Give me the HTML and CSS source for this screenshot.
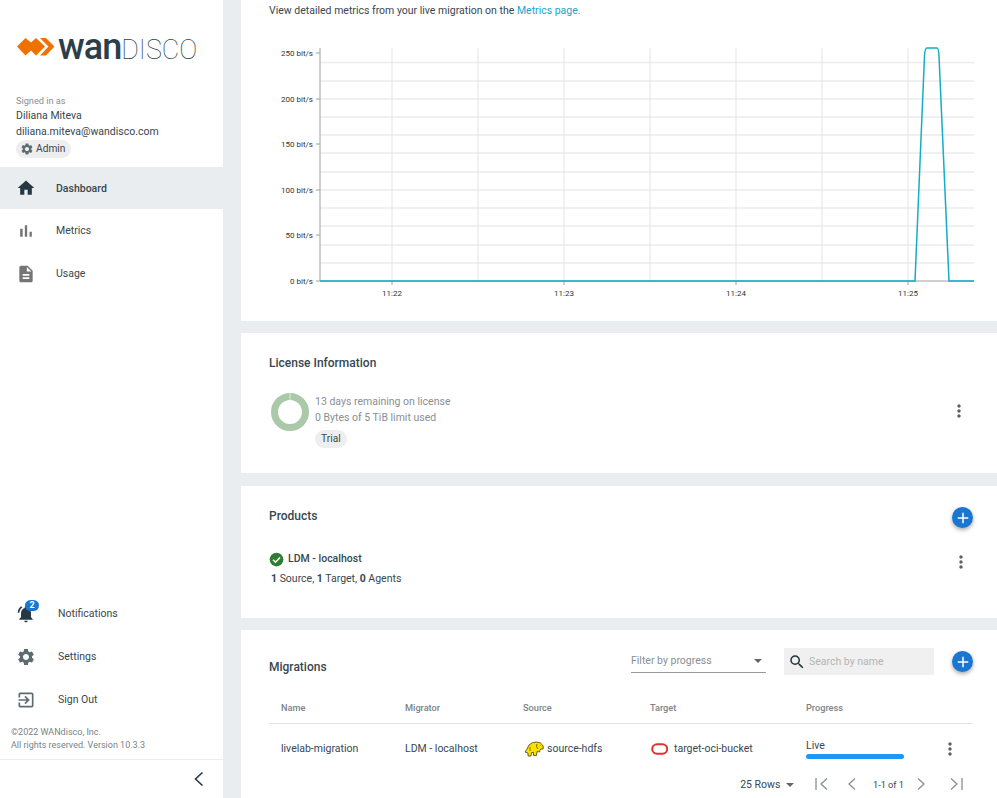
FILE: index.html
```html
<!DOCTYPE html>
<html lang="en">

<head>
    <meta charset="UTF-8">
    <meta name="viewport" content="width=device-width, initial-scale=1.0">
    <title>Dashboard</title>
    <link rel="stylesheet" href="styles.css">
</head>

<body>
    <aside class="sidebar">
        <div class="logo">
            <svg class="logo-mark" width="38" height="20" viewBox="0 0 38 20">
                <path d="M0 9.5 L8.5 1 L14 5.5 L19 1 L28 9.5 L19 18.5 L14 13.5 L8.5 18.5 Z" fill="#ee7203"/>
                <path d="M23 1 L29 1 L37.5 9.5 L29 18.5 L23 18.5 L31.5 9.5 Z" fill="#ee7203"/>
            </svg>
            <span class="logo-text"><b>wan</b>DISCO</span>
        </div>
        <div class="user">
            <div class="user-label">Signed in as</div>
            <div class="user-line">Diliana Miteva</div>
            <div class="user-line">diliana.miteva@wandisco.com</div>
            <span class="chip chip-admin">
                <svg width="14" height="14" viewBox="0 0 24 24"><path class="gear" d="M19.14 12.94c.04-.3.06-.61.06-.94 0-.32-.02-.64-.07-.94l2.03-1.58a.49.49 0 0 0 .12-.61l-1.92-3.32a.488.488 0 0 0-.59-.22l-2.39.96c-.5-.38-1.03-.7-1.62-.94l-.36-2.54a.484.484 0 0 0-.48-.41h-3.84c-.24 0-.43.17-.47.41l-.36 2.54c-.59.24-1.13.57-1.62.94l-2.39-.96c-.22-.08-.47 0-.59.22L2.74 8.87c-.12.21-.08.47.12.61l2.03 1.58c-.05.3-.09.63-.09.94s.02.64.07.94l-2.03 1.58a.49.49 0 0 0-.12.61l1.92 3.32c.12.22.37.29.59.22l2.39-.96c.5.38 1.03.7 1.62.94l.36 2.54c.05.24.24.41.48.41h3.84c.24 0 .44-.17.47-.41l.36-2.54c.59-.24 1.13-.56 1.62-.94l2.39.96c.22.08.47 0 .59-.22l1.92-3.32c.12-.22.07-.47-.12-.61l-2.01-1.58zM12 15.6c-1.98 0-3.6-1.62-3.6-3.6s1.62-3.6 3.6-3.6 3.6 1.62 3.6 3.6-1.62 3.6-3.6 3.6z"/></svg>
                Admin
            </span>
        </div>
        <nav class="nav">
            <a class="nav-item active">
                <svg width="20" height="20" viewBox="0 0 24 24"><path fill="#263843" d="M10 20v-6h4v6h5v-8h3L12 3 2 12h3v8z"/></svg>
                <span>Dashboard</span>
            </a>
            <a class="nav-item">
                <svg width="20" height="20" viewBox="0 0 24 24"><path fill="#757575" d="M5 9.2h3V19H5zM10.6 5h2.8v14h-2.8zm5.6 8H19v6h-2.8z"/></svg>
                <span>Metrics</span>
            </a>
            <a class="nav-item">
                <svg width="20" height="20" viewBox="0 0 24 24"><path fill="#757575" d="M14 2H6c-1.1 0-1.99.9-1.99 2L4 20c0 1.1.89 2 1.99 2H18c1.1 0 2-.9 2-2V8l-6-6zm2 16H8v-2h8v2zm0-4H8v-2h8v2zm-3-5V3.5L18.5 9H13z"/></svg>
                <span>Usage</span>
            </a>
        </nav>
        <nav class="nav nav-bottom">
            <a class="nav-item">
                <span class="bell">
                    <svg width="20" height="20" viewBox="0 0 24 24"><path fill="#263843" d="M12 22c1.1 0 2-.9 2-2h-4c0 1.1.9 2 2 2zm6-6v-5c0-3.07-1.63-5.64-4.5-6.32V4c0-.83-.67-1.5-1.5-1.5s-1.5.67-1.5 1.5v.68C7.64 5.36 6 7.92 6 11v5l-2 2v1h16v-1l-2-2zM7.58 4.08 6.15 2.65C3.75 4.48 2.17 7.3 2.03 10.5h2c.15-2.65 1.51-4.97 3.55-6.42z"/></svg>
                    <b class="badge">2</b>
                </span>
                <span>Notifications</span>
            </a>
            <a class="nav-item">
                <svg width="20" height="20" viewBox="0 0 24 24"><path class="gear" d="M19.14 12.94c.04-.3.06-.61.06-.94 0-.32-.02-.64-.07-.94l2.03-1.58a.49.49 0 0 0 .12-.61l-1.92-3.32a.488.488 0 0 0-.59-.22l-2.39.96c-.5-.38-1.03-.7-1.62-.94l-.36-2.54a.484.484 0 0 0-.48-.41h-3.84c-.24 0-.43.17-.47.41l-.36 2.54c-.59.24-1.13.57-1.62.94l-2.39-.96c-.22-.08-.47 0-.59.22L2.74 8.87c-.12.21-.08.47.12.61l2.03 1.58c-.05.3-.09.63-.09.94s.02.64.07.94l-2.03 1.58a.49.49 0 0 0-.12.61l1.92 3.32c.12.22.37.29.59.22l2.39-.96c.5.38 1.03.7 1.62.94l.36 2.54c.05.24.24.41.48.41h3.84c.24 0 .44-.17.47-.41l.36-2.54c.59-.24 1.13-.56 1.62-.94l2.39.96c.22.08.47 0 .59-.22l1.92-3.32c.12-.22.07-.47-.12-.61l-2.01-1.58zM12 15.6c-1.98 0-3.6-1.62-3.6-3.6s1.62-3.6 3.6-3.6 3.6 1.62 3.6 3.6-1.62 3.6-3.6 3.6z"/></svg>
                <span>Settings</span>
            </a>
            <a class="nav-item">
                <svg width="20" height="20" viewBox="0 0 24 24"><path fill="#5f6b73" d="M10.09 15.59 11.5 17l5-5-5-5-1.41 1.41L12.67 11H3v2h9.67l-2.58 2.59zM19 3H5c-1.11 0-2 .9-2 2v4h2V5h14v14H5v-4H3v4c0 1.1.89 2 2 2h14c1.1 0 2-.9 2-2V5c0-1.1-.9-2-2-2z"/></svg>
                <span>Sign Out</span>
            </a>
        </nav>
        <div class="copyright">
            ©2022 WANdisco, Inc.<br>
            All rights reserved. Version 10.3.3
        </div>
        <div class="collapse">
            <svg width="24" height="24" viewBox="0 0 24 24"><path fill="none" stroke="#263843" stroke-width="1.6" d="M15.5 5.5 8.5 12l7 6.5"/></svg>
        </div>
    </aside>

    <main class="main">
        <section class="card card-chart">
            <p class="chart-note">View detailed metrics from your live migration on the <a>Metrics page.</a></p>
            <svg class="chart" width="756" height="300" viewBox="241 0 756 300">
                <g stroke="#ececec" stroke-width="1.5">
                    <path d="M320 62.5H974M320 81H974M320 99H974M320 117H974M320 135H974M320 153H974M320 172H974M320 190H974M320 208H974M320 226H974M320 245H974M320 263H974"/>
                    <path stroke="#e4e4e4" stroke-width="1" d="M392 48V281M478 48V281M564 48V281M650 48V281M736 48V281M822 48V281M908 48V281"/>
                </g>
                <path stroke="#a0a0a0" fill="none" d="M320 48V281H974M316 53H320M316 99H320M316 144H320M316 190H320M316 235H320M316 281H320M392 281V285M564 281V285M736 281V285M908 281V285"/>
                <path fill="none" stroke="#12adc9" stroke-width="1.5" d="M320 281H915L924.5 56Q925 48 927 48H937Q938.5 48 939 56L949 281H974"/>
                <g class="tick-y">
                    <text x="313" y="56">250 bit/s</text>
                    <text x="313" y="102">200 bit/s</text>
                    <text x="313" y="147">150 bit/s</text>
                    <text x="313" y="193">100 bit/s</text>
                    <text x="313" y="238">50 bit/s</text>
                    <text x="313" y="284">0 bit/s</text>
                </g>
                <g class="tick-x">
                    <text x="392" y="296">11:22</text>
                    <text x="564" y="296">11:23</text>
                    <text x="736" y="296">11:24</text>
                    <text x="908" y="296">11:25</text>
                </g>
            </svg>
        </section>

        <section class="card card-license">
            <h2>License Information</h2>
            <div class="row">
                <svg class="donut" width="38" height="38" viewBox="0 0 38 38">
                    <circle cx="19" cy="19" r="15.5" fill="none" stroke="#a9c9a9" stroke-width="7"/>
                    <path d="M19 0V7" stroke="#dfeadf" stroke-width="1"/>
                </svg>
                <div class="license-text">
                    <div>13 days remaining on license</div>
                    <div>0 Bytes of 5 TiB limit used</div>
                    <span class="chip chip-trial">Trial</span>
                </div>
                <button class="more">
                    <svg width="20" height="20" viewBox="0 0 24 24"><path fill="#5f5f5f" d="M12 8c1.1 0 2-.9 2-2s-.9-2-2-2-2 .9-2 2 .9 2 2 2zm0 2c-1.1 0-2 .9-2 2s.9 2 2 2 2-.9 2-2-.9-2-2-2zm0 6c-1.1 0-2 .9-2 2s.9 2 2 2 2-.9 2-2-.9-2-2-2z"/></svg>
                </button>
            </div>
        </section>

        <section class="card card-products">
            <div class="card-head">
                <h2>Products</h2>
                <button class="fab">
                    <svg width="18" height="18" viewBox="0 0 24 24"><path fill="#fff" d="M19 13h-6v6h-2v-6H5v-2h6V5h2v6h6v2z"/></svg>
                </button>
            </div>
            <div class="row">
                <div class="product">
                    <div class="product-name">
                        <svg width="15" height="15" viewBox="0 0 24 24"><circle cx="12" cy="12" r="11" fill="#2e7d32"/><path fill="none" stroke="#fff" stroke-width="2.4" d="M6.5 12.5l3.8 3.8 7.4-7.6"/></svg>
                        LDM - localhost
                    </div>
                    <div class="product-counts"><b>1</b> Source, <b>1</b> Target, <b>0</b> Agents</div>
                </div>
                <button class="more">
                    <svg width="20" height="20" viewBox="0 0 24 24"><path fill="#5f5f5f" d="M12 8c1.1 0 2-.9 2-2s-.9-2-2-2-2 .9-2 2 .9 2 2 2zm0 2c-1.1 0-2 .9-2 2s.9 2 2 2 2-.9 2-2-.9-2-2-2zm0 6c-1.1 0-2 .9-2 2s.9 2 2 2 2-.9 2-2-.9-2-2-2z"/></svg>
                </button>
            </div>
        </section>

        <section class="card card-migrations">
            <div class="card-head">
                <h2>Migrations</h2>
                <div class="tools">
                    <div class="filter">
                        <span>Filter by progress</span>
                        <i class="caret"></i>
                    </div>
                    <div class="search">
                        <svg width="18" height="18" viewBox="0 0 24 24"><path fill="#263238" d="M15.5 14h-.79l-.28-.27A6.471 6.471 0 0 0 16 9.5 6.5 6.5 0 1 0 9.5 16c1.61 0 3.09-.59 4.23-1.57l.27.28v.79l5 4.99L20.49 19l-4.99-5zm-6 0C7.01 14 5 11.99 5 9.5S7.01 5 9.5 5 14 7.01 14 9.5 11.99 14 9.5 14z"/></svg>
                        <span>Search by name</span>
                    </div>
                    <button class="fab">
                        <svg width="18" height="18" viewBox="0 0 24 24"><path fill="#fff" d="M19 13h-6v6h-2v-6H5v-2h6V5h2v6h6v2z"/></svg>
                    </button>
                </div>
            </div>
            <table class="table">
                <colgroup>
                    <col class="col-name"><col class="col-migrator"><col class="col-source"><col class="col-target"><col>
                </colgroup>
                <thead>
                    <tr><th>Name</th><th>Migrator</th><th>Source</th><th>Target</th><th>Progress</th></tr>
                </thead>
                <tbody>
                    <tr>
                        <td>livelab-migration</td>
                        <td>LDM - localhost</td>
                        <td>
                            <span class="cell-icon icon-source">
                                <svg width="20" height="16" viewBox="0 0 20 16">
                                    <path fill="#f8e000" stroke="#4a4300" stroke-width=".8" d="M1 11 L3 8 L5 4 Q8 1 12 1 Q17 1 18.5 4 Q20 6 19 8 L17 8 L16 9 L15.5 11 L13 10.5 L12.5 14.5 L9.5 14.5 L9.5 11.5 L7.5 11.5 L7 15 L4 15 L4 12 Z"/>
                                    <path fill="none" stroke="#4a4300" stroke-width=".7" d="M13 3 Q11.5 6 14 8M16 4.5h.6M6 6v4"/>
                                </svg>
                                source-hdfs
                            </span>
                        </td>
                        <td>
                            <span class="cell-icon icon-target">
                                <svg width="18" height="12" viewBox="0 0 18 12"><rect x="1.2" y="1.2" width="15" height="9.6" rx="4.8" fill="none" stroke="#e0312b" stroke-width="2"/></svg>
                                target-oci-bucket
                            </span>
                        </td>
                        <td>
                            <div class="progress">
                                <div class="progress-text">
                                    <span>Live</span>
                                    <div class="bar"></div>
                                </div>
                                <button class="more">
                                    <svg width="20" height="20" viewBox="0 0 24 24"><path fill="#5f5f5f" d="M12 8c1.1 0 2-.9 2-2s-.9-2-2-2-2 .9-2 2 .9 2 2 2zm0 2c-1.1 0-2 .9-2 2s.9 2 2 2 2-.9 2-2-.9-2-2-2zm0 6c-1.1 0-2 .9-2 2s.9 2 2 2 2-.9 2-2-.9-2-2-2z"/></svg>
                                </button>
                            </div>
                        </td>
                    </tr>
                </tbody>
            </table>
            <div class="pager">
                <span class="rows">25 Rows <i class="caret"></i></span>
                <svg class="first" width="18" height="18" viewBox="0 0 18 18"><path class="pager-icon" d="M3 3V15M14 3.5 8 9l6 5.5"/></svg>
                <svg class="prev" width="18" height="18" viewBox="0 0 18 18"><path class="pager-icon" d="M12 3.5 6 9l6 5.5"/></svg>
                <span class="pages">1-1 of 1</span>
                <svg class="next" width="18" height="18" viewBox="0 0 18 18"><path class="pager-icon" d="M6 3.5 12 9l-6 5.5"/></svg>
                <svg class="last" width="18" height="18" viewBox="0 0 18 18"><path class="pager-icon" d="M15 3V15M4 3.5 10 9l-6 5.5"/></svg>
            </div>
        </section>
    </main>
</body>

</html>
```

FILE: styles.css
```css
html, body {
    margin: 0;
    height: 100%;
}

body {
    display: flex;
    height: 798px;
    overflow: hidden;
    background-color: #e9edf0;
    color: #37474f;
    font-family: Roboto, "Liberation Sans", sans-serif;
    font-size: 10.5px;
}

/* sidebar */
.sidebar {
    display: flex;
    flex-direction: column;
    flex: none;
    width: 223px;
    background-color: #fff;
}

.logo {
    display: flex;
    align-items: center;
    height: 36px;
    margin-top: 29px;
    padding-left: 17px;
}

.logo-text {
    margin-left: 3px;
    color: #2c3e4a;
    font-size: 27px;
    font-weight: 100;
}

.logo-text b {
    font-size: 36px;
    font-weight: 500;
    letter-spacing: -1px;
}

.user {
    padding: 29px 0 0 16px;
    height: 73px;
    line-height: 16px;
}

.user-label {
    color: #8a8f93;
    font-size: 9.2px;
    line-height: 14px;
}

.chip {
    display: inline-flex;
    align-items: center;
    border-radius: 10px;
    background-color: #eeeeee;
}

.chip-admin {
    gap: 2px;
    height: 18px;
    padding: 0 6px 0 4px;
    font-size: 10.2px;
}

.gear {
    fill: #5f6b73;
}

.nav {
    display: flex;
    flex-direction: column;
}

.nav-bottom {
    margin-top: auto;
}

.nav-item {
    display: flex;
    align-items: center;
    gap: 20px;
    height: 43px;
    padding-left: 16px;
}

.nav-bottom .nav-item {
    gap: 22px;
}

.nav-item.active {
    height: 42px;
    background-color: #e9edf0;
    font-weight: 500;
}

.bell {
    position: relative;
    display: flex;
}

.badge {
    position: absolute;
    top: -4px;
    left: 9px;
    width: 14px;
    height: 11px;
    border-radius: 6px;
    background-color: #1976d2;
    color: #fff;
    font-size: 9px;
    line-height: 11px;
    text-align: center;
}

.copyright {
    padding: 5px 0 7px 11px;
    color: #7b8185;
    font-size: 9px;
    line-height: 13px;
}

.collapse {
    display: flex;
    justify-content: flex-end;
    align-items: center;
    height: 38px;
    padding-right: 12px;
    border-top: 1px solid #eeeeee;
}

/* main column */
.main {
    display: flex;
    flex-direction: column;
    flex: none;
    gap: 12px;
    width: 756px;
    margin-left: 18px;
}

.card {
    flex: none;
    box-sizing: border-box;
    padding: 0 24px 0 28px;
    background-color: #fff;
}

.card-chart {
    position: relative;
    height: 321px;
}

.card-license {
    height: 140px;
}

.card-products {
    height: 132px;
    margin-top: 1px;
}

.card-migrations {
    height: 168px;
}

h2 {
    margin: 0;
    font-size: 12px;
    font-weight: 500;
    color: #37474f;
}

.chart-note {
    margin: 0;
    padding-top: 3px;
    line-height: 16px;
}

.chart-note a {
    color: #1ea5c4;
}

/* the chart is drawn to page coordinates */
.chart {
    position: absolute;
    top: 0;
    left: 0;
}

.chart text {
    fill: #333333;
    font-size: 8px;
}

.tick-y text {
    text-anchor: end;
}

.tick-x text {
    text-anchor: middle;
}

.row {
    display: flex;
    align-items: flex-start;
}

.more {
    display: flex;
    margin-left: auto;
    padding: 0;
    border: none;
    background: none;
}

.card-license h2 {
    padding-top: 23px;
}

.card-license .row {
    gap: 6px;
    margin-top: 23px;
    padding-left: 2px;
}

.card-license .more {
    margin-top: 8px;
    margin-right: 4px;
}

.license-text {
    padding-top: 1px;
    color: #8a8f93;
    line-height: 16px;
}

.chip-trial {
    height: 18px;
    margin-top: 4px;
    padding: 0 6px;
    color: #37474f;
    font-size: 10.2px;
}

.card-head {
    display: flex;
    justify-content: space-between;
    align-items: center;
}

.fab {
    display: flex;
    justify-content: center;
    align-items: center;
    width: 21px;
    height: 21px;
    padding: 0;
    border: none;
    border-radius: 50%;
    background-color: #1976d2;
    box-shadow: 0 2px 4px rgba(0, 0, 0, 0.35);
}

.card-products .card-head {
    height: 21px;
    padding-top: 21px;
}

.card-products h2 {
    margin-bottom: 3px;
}

.card-products .row {
    margin-top: 23px;
}

.card-products .more {
    margin-top: 1px;
    margin-right: 2px;
}

.product-name {
    display: flex;
    align-items: center;
    gap: 4px;
    font-weight: 500;
    line-height: 16px;
}

.product-counts {
    margin-top: 4px;
    padding-left: 2px;
    line-height: 16px;
}

.product-counts b {
    font-weight: 700;
}

/* migrations */
.card-migrations .card-head {
    height: 27px;
    padding-top: 18px;
}

.card-migrations h2 {
    margin-top: 10px;
}

.tools {
    display: flex;
    align-items: center;
}

.filter {
    display: flex;
    justify-content: space-between;
    align-items: center;
    box-sizing: border-box;
    width: 135px;
    height: 23px;
    margin-bottom: 1px;
    border-bottom: 1px solid #9a9a9a;
    color: #8a8f93;
}

.caret {
    display: inline-block;
    border-left: 4px solid transparent;
    border-right: 4px solid transparent;
    border-top: 4px solid #666;
}

.filter .caret {
    margin-right: 4px;
}

.search {
    display: flex;
    align-items: center;
    gap: 3px;
    box-sizing: border-box;
    width: 150px;
    height: 27px;
    margin-left: 18px;
    padding-left: 4px;
    background-color: #f0f0f0;
    color: #b4b4b4;
}

.tools .fab {
    margin-left: 18px;
}

.table {
    width: 100%;
    margin-top: 16px;
    border-collapse: collapse;
    table-layout: fixed;
}

.col-name {
    width: 124px;
}

.col-migrator {
    width: 118px;
}

.col-source {
    width: 127px;
}

.col-target {
    width: 156px;
}

.table th {
    height: 32px;
    padding: 0 0 0 12px;
    border-bottom: 1px solid #e4e4e4;
    color: #7c8286;
    font-size: 9.2px;
    font-weight: 500;
    text-align: left;
}

.table td {
    height: 49px;
    padding: 0 0 0 12px;
}

.cell-icon {
    display: flex;
    align-items: center;
}

.icon-source {
    gap: 3px;
    padding-left: 1px;
}

.icon-target {
    gap: 5px;
    padding-left: 1px;
}

.progress {
    display: flex;
    align-items: center;
}

.progress-text {
    width: 98px;
}

.bar {
    height: 5px;
    margin-top: 2px;
    border-radius: 3px;
    background-color: #2196f3;
}

.progress .more {
    margin-right: 13px;
}

.pager {
    display: flex;
    justify-content: flex-end;
    align-items: center;
    height: 22px;
    padding-right: 8px;
}

.rows {
    margin-right: 19px;
}

.rows .caret {
    margin-left: 3px;
    vertical-align: 1px;
}

.prev {
    margin-left: 12px;
    margin-right: 12px;
}

.pages {
    font-size: 9.2px;
}

.next {
    margin-left: 8px;
    margin-right: 17px;
}

.pager-icon {
    fill: none;
    stroke: #8a8f93;
    stroke-width: 1.3;
}
```
